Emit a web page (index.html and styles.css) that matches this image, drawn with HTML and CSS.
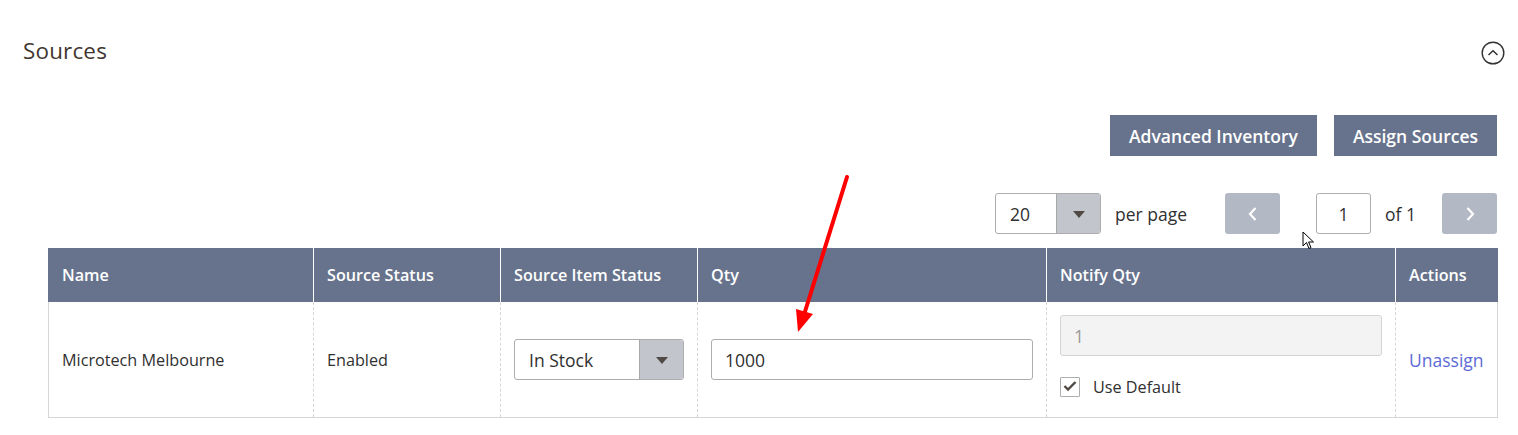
FILE: index.html
```html
<!DOCTYPE html>
<html lang="en">
<head>
  <meta charset="UTF-8">
  <title>Sources</title>
  <link rel="stylesheet" href="styles.css">
</head>
<body>
  <div class="page">
    <div class="section-head">
      <h2 class="section-title">Sources</h2>
      <span class="collapse">
        <svg width="24" height="24" viewBox="0 0 24 24">
          <circle cx="12" cy="12" r="10.8" fill="none" stroke="#333" stroke-width="1.4"/>
          <path d="M7.5 14 L12 9.8 L16.5 14" fill="none" stroke="#333" stroke-width="1.5"/>
        </svg>
      </span>
    </div>

    <div class="content">
      <div class="actions">
        <button class="btn">Advanced Inventory</button>
        <button class="btn">Assign Sources</button>
      </div>

      <div class="pager">
        <div class="select small">
          <span class="select-value">20</span>
          <span class="select-arrow"></span>
        </div>
        <span class="per-page">per page</span>
        <button class="page-btn prev">
          <svg width="12" height="16" viewBox="0 0 12 16"><path d="M8.5 2 L3 8 L8.5 14" fill="none" stroke="#fff" stroke-width="2.2"/></svg>
        </button>
        <input class="page-input" type="text" value="1">
        <span class="page-of">of 1</span>
        <button class="page-btn next">
          <svg width="12" height="16" viewBox="0 0 12 16"><path d="M3.5 2 L9 8 L3.5 14" fill="none" stroke="#fff" stroke-width="2.2"/></svg>
        </button>
      </div>

      <table class="grid">
        <colgroup>
          <col style="width:265px">
          <col style="width:187px">
          <col style="width:197px">
          <col style="width:349px">
          <col style="width:349px">
          <col style="width:102px">
        </colgroup>
        <thead>
          <tr>
            <th>Name</th>
            <th>Source Status</th>
            <th>Source Item Status</th>
            <th>Qty</th>
            <th>Notify Qty</th>
            <th>Actions</th>
          </tr>
        </thead>
        <tbody>
          <tr>
            <td>Microtech Melbourne</td>
            <td>Enabled</td>
            <td>
              <div class="select status">
                <span class="select-value">In Stock</span>
                <span class="select-arrow"></span>
              </div>
            </td>
            <td><input class="text-input" type="text" value="1000"></td>
            <td class="notify">
              <input class="text-input disabled" type="text" value="1" disabled>
              <label class="use-default">
                <span class="checkbox">
                  <svg width="14" height="12" viewBox="0 0 14 12"><path d="M1.5 5 L5 8.5 L12.5 1" fill="none" stroke="#514943" stroke-width="2.4"/></svg>
                </span>
                Use Default
              </label>
            </td>
            <td><a class="link" href="#">Unassign</a></td>
          </tr>
        </tbody>
      </table>
    </div>

    <!-- annotation arrow drawn over the grid -->
    <svg class="annotation" width="1518" height="435" viewBox="0 0 1518 435">
      <line x1="847" y1="177" x2="803" y2="318" stroke="#f00" stroke-width="4" stroke-linecap="round"/>
      <polygon points="798,332 796,309 813,314" fill="#f00"/>
    </svg>

    <svg class="cursor" width="13" height="20" viewBox="0 0 13 20">
      <path d="M1 1 L1 15 L4.5 11.5 L7 17.5 L9 16.6 L6.6 11 L11.5 11 Z" fill="#fff" stroke="#000" stroke-width="1"/>
    </svg>
  </div>
</body>
</html>
```

FILE: styles.css
```css
body {
  margin: 0;
  font-family: "Open Sans", "Liberation Sans", sans-serif;
  color: #303030;
  background: #fff;
}

.page {
  position: relative;
  width: 1518px;
  height: 435px;
  overflow: hidden;
}

.section-head {
  display: flex;
  justify-content: space-between;
  align-items: center;
  padding: 28px 13px 0 23px;
  height: 44px;
}

.section-title {
  margin: 0;
  font-size: 22.4px;
  font-weight: 400;
  color: #41362f;
  letter-spacing: 0.2px;
}

.collapse {
  display: block;
  width: 24px;
  height: 24px;
  margin-top: 6px;
}

.content {
  padding: 0 21px 0 48px;
}

.actions {
  display: flex;
  justify-content: flex-end;
  gap: 17px;
  margin-top: 43px;
}

.btn {
  height: 41px;
  padding: 0 19px;
  border: none;
  background: #67738c;
  color: #fff;
  font-family: inherit;
  font-size: 17.5px;
  font-weight: 600;
}

.pager {
  display: flex;
  justify-content: flex-end;
  align-items: center;
  margin-top: 37px;
  font-size: 17.5px;
}

.select {
  display: flex;
  height: 41px;
  box-sizing: border-box;
  border: 1px solid #adadad;
  border-radius: 3px;
  overflow: hidden;
  background: #fff;
}

.select.small {
  width: 106px;
}

.select.status {
  width: 170px;
}

.select-value {
  flex: 1;
  display: flex;
  align-items: center;
  padding-left: 14px;
  font-size: 17.5px;
}

.select-arrow {
  position: relative;
  width: 43px;
  background: #c2c6cc;
  border-left: 1px solid #a8a8a8;
}

.select-arrow::after {
  content: "";
  position: absolute;
  left: 16px;
  top: 17px;
  border-left: 6px solid transparent;
  border-right: 6px solid transparent;
  border-top: 7px solid #514943;
}

.per-page {
  margin-left: 14px;
  margin-right: 38px;
}

.page-btn {
  display: flex;
  align-items: center;
  justify-content: center;
  width: 55px;
  height: 41px;
  border: none;
  border-radius: 3px;
  background: #b2b9c5;
  padding: 0;
}

.page-input {
  width: 55px;
  height: 41px;
  box-sizing: border-box;
  margin-left: 36px;
  border: 1px solid #adadad;
  border-radius: 3px;
  text-align: center;
  font-family: inherit;
  font-size: 17.5px;
  color: #303030;
}

.page-of {
  margin-left: 14px;
  margin-right: 26px;
}

.grid {
  width: 1449px;
  margin-top: 14px;
  border-collapse: collapse;
  table-layout: fixed;
}

.grid th {
  height: 54px;
  padding: 0 13px;
  background: #67738c;
  color: #fff;
  text-align: left;
  font-size: 16.2px;
  font-weight: 600;
  border-left: 1px solid #fff;
}

.grid th:first-child {
  border-left: 1px solid #67738c;
}

.grid td {
  height: 115px;
  padding: 0 13px;
  font-size: 16.2px;
  border-left: 1px dashed #d6d6d6;
  border-bottom: 1px solid #d6d6d6;
  vertical-align: middle;
}

.grid td:first-child {
  border-left: 1px solid #d6d6d6;
}

.grid td:last-child {
  border-right: 1px solid #d6d6d6;
}

.grid td.notify {
  vertical-align: top;
}

.text-input {
  display: block;
  width: 100%;
  height: 41px;
  box-sizing: border-box;
  border: 1px solid #adadad;
  border-radius: 3px;
  padding: 0 13px;
  font-family: inherit;
  font-size: 17.5px;
  color: #303030;
  background: #fff;
}

.text-input.disabled {
  background: #f3f3f3;
  border-color: #d4d4d4;
  color: #999;
}

.notify .text-input {
  margin-top: 13px;
}

.use-default {
  display: flex;
  align-items: center;
  margin-top: 20px;
  font-size: 16.2px;
}

.checkbox {
  display: flex;
  align-items: center;
  justify-content: center;
  width: 20px;
  height: 20px;
  box-sizing: border-box;
  border: 1px solid #adadad;
  border-radius: 1px;
  margin-right: 13px;
}

.link {
  color: #5b6ad6;
  text-decoration: none;
  font-size: 17.5px;
}

.annotation {
  position: absolute;
  left: 0;
  top: 0;
  pointer-events: none;
}

.cursor {
  position: absolute;
  left: 1302px;
  top: 231px;
}
```
